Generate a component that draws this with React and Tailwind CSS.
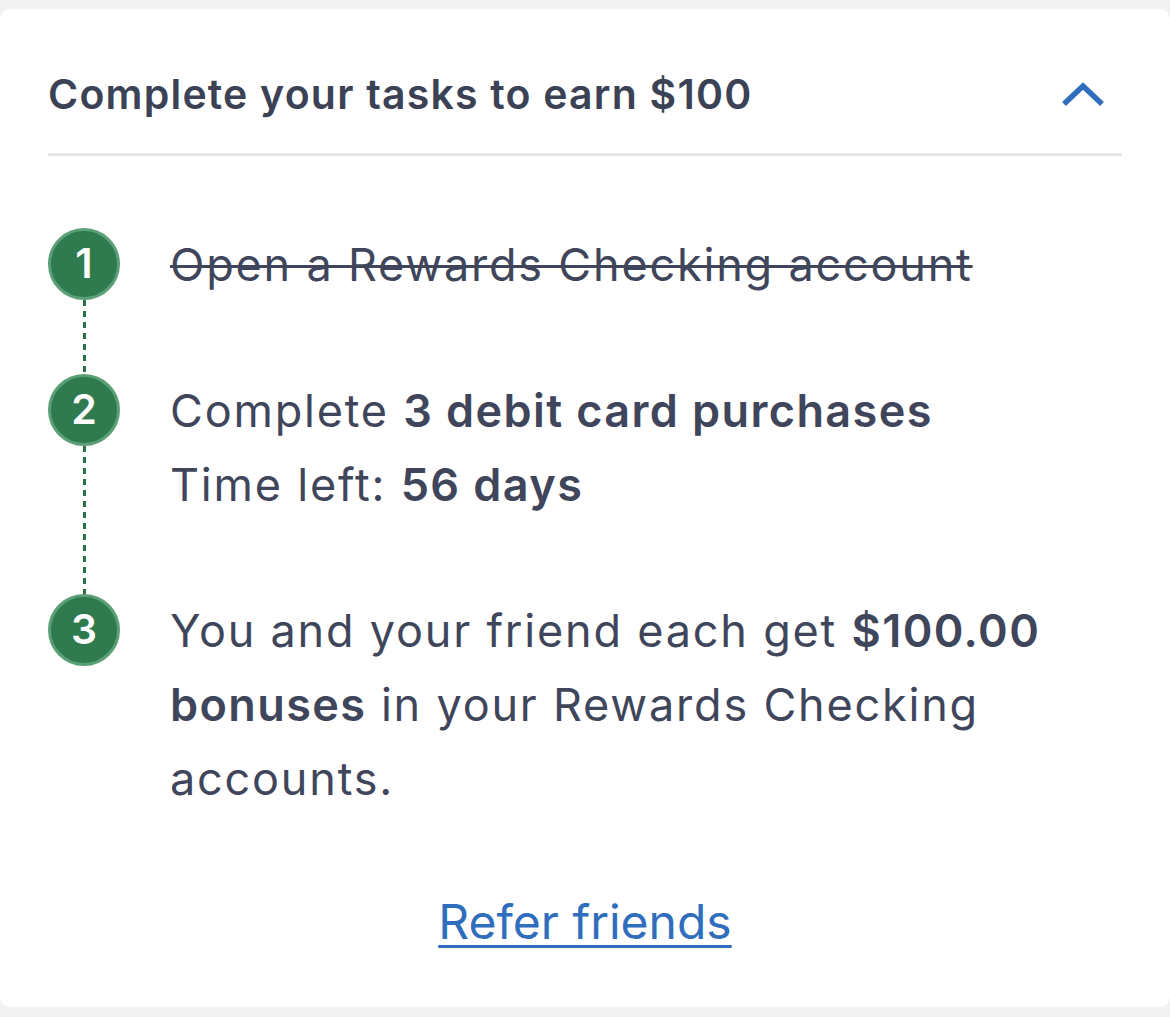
import React from "react";

const B = ({ children }) => <b className="font-semibold tracking-[1.4px]">{children}</b>;

const steps = [
  {
    n: 1,
    done: true,
    lines: [<span key="a">Open a Rewards Checking account</span>],
  },
  {
    n: 2,
    lines: [
      <span key="a">
        Complete <B>3 debit card purchases</B>
      </span>,
      <br key="br" />,
      <span key="b">
        Time left: <B>56 days</B>
      </span>,
    ],
  },
  {
    n: 3,
    lines: [
      <span key="a">
        You and your friend each get <B>$100.00</B> <B>bonuses</B> in your Rewards Checking
        accounts.
      </span>,
    ],
  },
];

function Step({ step, last }) {
  return (
    <div className={`flex ${last ? "" : "pb-[72px]"}`}>
      <div className="relative flex w-[72px] shrink-0 flex-col items-center">
        <div className="z-10 flex h-[72px] w-[72px] items-center justify-center rounded-full border-[3px] border-[#5a9f75] bg-[#2f7a4f] text-[41px] font-semibold text-white">
          {step.n}
        </div>
        {!last && (
          <div className="absolute top-[72px] -bottom-[72px] left-[34.5px] w-[3px] bg-[repeating-linear-gradient(to_bottom,#2a7049_0px,#2a7049_6px,transparent_6px,transparent_11px)]" />
        )}
      </div>
      <div
        className={`ml-[50px] max-w-[880px] text-[45px] leading-[74px] tracking-[1.8px] text-[#3f465b] ${
          step.done ? "line-through decoration-[3px]" : ""
        }`}
      >
        {step.lines}
      </div>
    </div>
  );
}

export default function App() {
  return (
    <div className="min-h-[1017px] bg-[#f2f2f2] pt-[9px] font-['Inter',sans-serif]">
      <div className="h-[998px] rounded-[10px] bg-white px-[48px]">
        <div className="flex h-[147px] items-center justify-between border-b-[3px] border-[#e6e6e6] pt-[28px]">
          <h2 className="text-[41px] font-semibold tracking-[1.2px] text-[#3b4256]">
            Complete your tasks to earn $100
          </h2>
          <svg width="46" height="30" viewBox="0 0 46 30" className="mr-[16px] mt-[-2px]">
            <path d="M4 25 L23 7 L42 25" fill="none" stroke="#2f6dbd" strokeWidth="5.5" />
          </svg>
        </div>
        <div className="pt-[72px]">
          {steps.map((s, i) => (
            <Step key={s.n} step={s} last={i === steps.length - 1} />
          ))}
        </div>
        <div className="mt-[76px] flex justify-center">
          <a href="#" className="text-[48px] leading-[60px] text-[#2f6dbd] underline decoration-[3px] underline-offset-[6px]">
            Refer friends
          </a>
        </div>
      </div>
    </div>
  );
}
